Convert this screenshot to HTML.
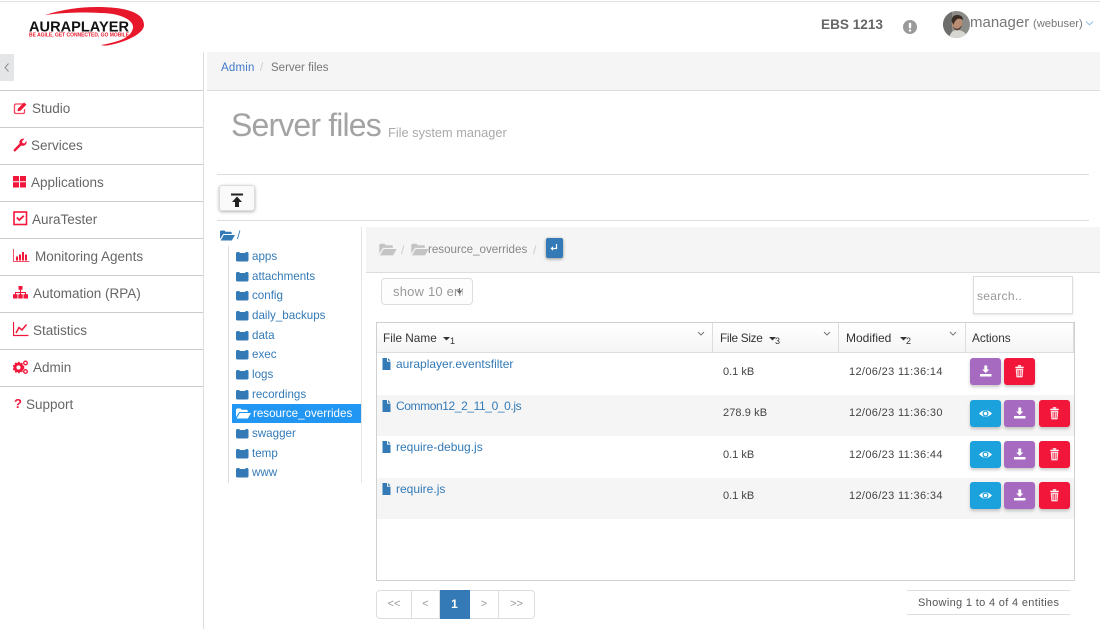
<!DOCTYPE html>
<html><head><meta charset="utf-8"><title>Server files</title>
<style>
html,body{margin:0;padding:0;background:#fff}
#p{position:relative;width:1100px;height:629px;overflow:hidden;background:#fff;font-family:"Liberation Sans",sans-serif;font-size:13px;color:#666}
#p div,#p span.a,#p svg.a{position:absolute}
.t{white-space:nowrap;line-height:16px}
.l{left:0;width:203px;height:1px;background:#ccc}
.m{font-size:13.5px;color:#666;white-space:nowrap;line-height:18px;margin-top:1px}
.h{background:#ddd;height:1px}
.n{color:#337ab7;font-size:11.6px;left:252px;white-space:nowrap;line-height:16px;margin-top:1px}
.th{font-size:11.8px;color:#333;top:331px;white-space:nowrap;line-height:14px}
.sb{font-size:9px;color:#333;top:334px;line-height:14px}
.b{width:31px;height:27px;border-radius:3px;box-shadow:0 2px 3px rgba(0,0,0,.22)}
.b svg{position:absolute;left:8px;top:6px}
.pu{background:#a66bc0}.re{background:#f2163a}.bl{background:#1ba1db}
.f{color:#337ab7;font-size:12px;left:396px;white-space:nowrap;line-height:16px}
.d{font-size:11px;color:#444;white-space:nowrap;line-height:14px;letter-spacing:.35px}
.k{letter-spacing:0}
.pg{top:590px;height:29px;line-height:27px;text-align:center;font-size:11px;color:#999;box-sizing:border-box;border:1px solid #ddd;border-left:0;background:#fff}
</style></head><body><div id="p">
<svg width="0" height="0" style="position:absolute"><defs>
<path id="fc" d="M0 3.5Q0 2 1.500 2H3L4 3H9L10 2H11Q12.500 2 12.500 3.500V10Q12.500 11.500 11 11.500H1.500Q0 11.500 0 10Z"/>
<path id="fo" d="M0 2.800Q0 1.500 1.300 1.500H4.500L5.600 2.800H10.500Q11.700 2.800 11.700 4V5H3.200L0 10ZM3.800 6H15L11.800 11.500H.6Z"/>
<g id="dl"><path d="M6.300 1.500H9.200V5.500H11.300L7.700 9 4.200 5.500H6.300Z" fill="#fff"/><path d="M2 10H13.500V12.500H2Z" fill="#fff"/></g>
<g id="tr"><path d="M3.300 2.800H11.700V4H3.300ZM5.800 1.200H9.200V2.500H5.800Z" fill="#fff"/><path d="M3.700 4.600H11.300L10.600 13.400H4.400ZM5.600 6V12H6.300V6ZM7.200 6V12H7.900V6ZM8.800 6V12H9.500V6Z" fill="#fff" fill-opacity=".85" fill-rule="evenodd"/></g>
<g id="ey"><path d="M1 7.500Q7.500 1 14 7.500 7.500 14 1 7.500Z" fill="#fff"/><circle cx="7.500" cy="7.500" r="3" fill="#1ba1db"/><circle cx="7.500" cy="7.500" r="1.700" fill="#fff"/></g>
<path id="fl" d="M1.500 0H6V3.600H9.500V12H1.500ZM7 0 9.500 2.600H7Z"/>
</defs></svg>

<div class="h" style="left:0;top:1px;width:1100px;background:#e2e2e2"></div>

<svg class="a" style="left:0;top:0" width="150" height="50" viewBox="0 0 150 50">
<path d="M45 15Q70 7 97 7C130 7 144 14 144 25 144 34 125 42 110 45 105 46 103 45.500 101 45 118 42 131 38 133 28 134 20 120 13 100 13 72 11 45 15 45 15Z" fill="#e8182c"/>
<text x="29" y="31.700" font-family="Liberation Sans" font-size="15" font-weight="bold" fill="#111" textLength="100" lengthAdjust="spacingAndGlyphs">AURAPLAYER</text>
<text x="29" y="36.500" font-family="Liberation Sans" font-size="5.600" font-weight="bold" fill="#e8182c" textLength="100" lengthAdjust="spacingAndGlyphs">BE AGILE, GET CONNECTED, GO MOBILE</text>
</svg>

<div class="t" style="left:821px;top:17px;font-size:13.600px;font-weight:bold;color:#666">EBS 1213</div>
<svg class="a" style="left:903px;top:20px" width="14" height="14"><circle cx="7" cy="7" r="7" fill="#9a9a9a"/><rect x="5.800" y="2.800" width="2.400" height="5.600" rx="1" fill="#fff"/><rect x="5.800" y="9.400" width="2.400" height="2.200" rx="1" fill="#fff"/></svg>
<svg class="a" style="left:943px;top:11px" width="27" height="27" viewBox="0 0 27 27"><defs><clipPath id="av"><circle cx="13.500" cy="13.500" r="13.500"/></clipPath></defs><g clip-path="url(#av)"><rect width="27" height="27" fill="#8b8b88"/><rect x="0" width="9" height="27" fill="#6e6e6c"/><path d="M6 27Q8 19 14 19 22 19 25 27Z" fill="#d8d6d0"/><ellipse cx="14" cy="12" rx="5.300" ry="7" fill="#b98d74"/><path d="M8.500 10Q9 3.500 15 4 20 4.500 20 9 17 7 14 8 11 11 10.500 14Z" fill="#3a2c25"/><path d="M10 15Q14 21 19 14 18 19 14 19.500 11 19 10 15Z" fill="#54403a"/></g></svg>
<div class="t" style="left:970px;top:15px;font-size:15px;color:#777">manager</div>
<div class="t" style="left:1033px;top:16px;font-size:11.200px;color:#777">(webuser)</div>
<svg class="a" style="left:1085px;top:20px" width="10" height="7"><path d="M1 1.500 4.500 4.800 8 1.500" fill="none" stroke="#8fc0ea" stroke-width="1"/></svg>

<div style="left:203px;top:52px;width:1px;height:577px;background:#ddd"></div>
<div style="left:0;top:54px;width:14px;height:27px;background:#e4e5e6"></div>
<svg class="a" style="left:3px;top:62px" width="8" height="11"><path d="M5.500 1.500 2 5.500 5.500 9.500" fill="none" stroke="#8a9097" stroke-width="1"/></svg>

<div class="l" style="top:90px"></div><div class="l" style="top:127px"></div><div class="l" style="top:164px"></div><div class="l" style="top:201px"></div><div class="l" style="top:238px"></div><div class="l" style="top:275px"></div><div class="l" style="top:312px"></div><div class="l" style="top:349px"></div><div class="l" style="top:386px"></div>

<svg class="a" style="left:13px;top:101px" width="16" height="14" viewBox="0 0 16 14"><path d="M11 3H3Q1.500 3 1.500 4.500V11Q1.500 12.500 3 12.500H10Q11.500 12.500 11.500 11V8" fill="none" stroke="#f2163a" stroke-width="1.300" opacity=".8"/><path d="M5 7.500 11 1.500 13.500 3.500 7.500 9.800 4.500 10.300Z" fill="#f2163a"/></svg>
<div class="m" style="left:32px;top:99px">Studio</div>
<svg class="a" style="left:13px;top:138px" width="14" height="14" viewBox="0 0 14 14"><path d="M.8 11.500 6.500 5.600Q5.800 2.500 8.500 1 10.300.3 11.500.8L9 3.200 9.500 5 11.300 5.500 13.500 3Q14 5 12.500 6.800 10.500 8.500 8.200 7.500L2.500 13.300Q1.500 13.800.8 13 .3 12.300.8 11.500Z" fill="#f2163a"/></svg>
<div class="m" style="left:31px;top:136px">Services</div>
<svg class="a" style="left:13px;top:176px" width="14" height="12"><path d="M0 0H6V5.300H0ZM7 0H13V5.300H7ZM0 6.300H6V11.500H0ZM7 6.300H13V11.500H7Z" fill="#f2163a"/></svg>
<div class="m" style="left:31px;top:173px">Applications</div>
<svg class="a" style="left:13px;top:211px" width="15" height="15"><rect x="1" y="1" width="12.500" height="12.500" fill="none" stroke="#f2163a" stroke-width="1.600"/><path d="M3.800 6.500 6.300 9 10.800 4.800" fill="none" stroke="#f2163a" stroke-width="1.800"/></svg>
<div class="m" style="left:32px;top:210px">AuraTester</div>
<svg class="a" style="left:13px;top:249px" width="17" height="14"><path d="M.5 0V12.500H16.500" fill="none" stroke="#f2163a" stroke-width="1" opacity=".75"/><path d="M3 7.500H5V11.500H3ZM6 5.500H8V11.500H6ZM9 3H11V11.500H9ZM12 5.500H14V11.500H12Z" fill="#f2163a"/></svg>
<div class="m" style="left:35px;top:247px">Monitoring Agents</div>
<svg class="a" style="left:13px;top:286px" width="15" height="13"><path d="M5.500 0H9.500V3.800H5.500ZM7 3.500H8V6H13V8.500H12V7H8V8.500H7V7H3V8.500H2V6H7Z" fill="#f2163a"/><path d="M0 8.300H4.500V12.500H0ZM5.300 8.300H9.700V12.500H5.300ZM10.500 8.300H15V12.500H10.500Z" fill="#f2163a"/></svg>
<div class="m" style="left:33px;top:284px">Automation (RPA)</div>
<svg class="a" style="left:13px;top:322px" width="16" height="15"><path d="M.5 0V13.500H15.500" fill="none" stroke="#f2163a" stroke-width="1.200"/><path d="M3 11 6 5.500 9 8 13.500 2.500" fill="none" stroke="#f2163a" stroke-width="1.500"/></svg>
<div class="m" style="left:33px;top:321px">Statistics</div>
<svg class="a" style="left:13px;top:360px" width="16" height="15"><circle cx="5.500" cy="7.500" r="3.500" fill="none" stroke="#f2163a" stroke-width="2.800"/><circle cx="5.500" cy="7.500" r="5.200" fill="none" stroke="#f2163a" stroke-width="1.200" stroke-dasharray="1.800 1.600"/><circle cx="12.500" cy="3" r="1.800" fill="none" stroke="#f2163a" stroke-width="1.300"/><circle cx="12.500" cy="11.500" r="1.800" fill="none" stroke="#f2163a" stroke-width="1.300"/></svg>
<div class="m" style="left:33px;top:358px">Admin</div>
<div class="t" style="left:14px;top:396px;font-size:13px;font-weight:bold;color:#f2163a">?</div>
<div class="m" style="left:26px;top:395px">Support</div>

<div style="left:207px;top:52px;width:893px;height:38px;background:#f5f5f5;border-bottom:1px solid #ddd"></div>
<div class="t" style="left:221px;top:60px;font-size:11.500px;color:#4179c9;letter-spacing:.2px">Admin</div>
<div class="t" style="left:260px;top:60px;font-size:11.500px;color:#ccc">/</div>
<div class="t" style="left:271px;top:60px;font-size:11.500px;color:#777">Server files</div>
<div class="t" style="left:231px;top:106px;font-size:32px;line-height:38px;color:#a3a3a3;letter-spacing:-.85px">Server files</div>
<div class="t" style="left:388px;top:125px;font-size:12.800px;color:#aaa">File system manager</div>

<div class="h" style="left:217px;top:174px;width:872px"></div>
<div style="left:219px;top:185px;width:36px;height:26px;background:#fafafa;border:1px solid #ddd;box-sizing:border-box;border-radius:3px;box-shadow:0 1px 3px rgba(0,0,0,.3)"></div>
<svg class="a" style="left:230px;top:193px" width="14" height="15"><path d="M1 .500H13V2.500H1ZM7 3.500 12 9H9V14H5V9H2Z" fill="#222"/></svg>
<div class="h" style="left:217px;top:220px;width:872px"></div>

<svg class="a" style="left:220px;top:229px" width="15" height="13" fill="#337ab7"><use href="#fo"/></svg>
<div class="t" style="left:237px;top:227px;font-size:12px;color:#337ab7">/</div>
<div style="left:228px;top:246px;width:1px;height:237px;background:#ddd"></div>
<div style="left:361px;top:227px;width:1px;height:256px;background:#e5e5e5"></div>
<div style="left:232px;top:404px;width:129px;height:19px;background:#2196f3"></div>

<svg class="a" style="left:236px;top:250px" width="13" height="12" fill="#337ab7"><use href="#fc"/></svg><div class="n" style="top:248px">apps</div>
<svg class="a" style="left:236px;top:270px" width="13" height="12" fill="#337ab7"><use href="#fc"/></svg><div class="n" style="top:268px">attachments</div>
<svg class="a" style="left:236px;top:289px" width="13" height="12" fill="#337ab7"><use href="#fc"/></svg><div class="n" style="top:287px">config</div>
<svg class="a" style="left:236px;top:309px" width="13" height="12" fill="#337ab7"><use href="#fc"/></svg><div class="n" style="top:307px">daily_backups</div>
<svg class="a" style="left:236px;top:329px" width="13" height="12" fill="#337ab7"><use href="#fc"/></svg><div class="n" style="top:327px">data</div>
<svg class="a" style="left:236px;top:348px" width="13" height="12" fill="#337ab7"><use href="#fc"/></svg><div class="n" style="top:346px">exec</div>
<svg class="a" style="left:236px;top:368px" width="13" height="12" fill="#337ab7"><use href="#fc"/></svg><div class="n" style="top:366px">logs</div>
<svg class="a" style="left:236px;top:388px" width="13" height="12" fill="#337ab7"><use href="#fc"/></svg><div class="n" style="top:386px">recordings</div>
<svg class="a" style="left:236px;top:407px" width="15" height="12" fill="#fff"><use href="#fo"/></svg><div class="n" style="top:405px;left:253px;color:#fff">resource_overrides</div>
<svg class="a" style="left:236px;top:427px" width="13" height="12" fill="#337ab7"><use href="#fc"/></svg><div class="n" style="top:425px">swagger</div>
<svg class="a" style="left:236px;top:447px" width="13" height="12" fill="#337ab7"><use href="#fc"/></svg><div class="n" style="top:445px">temp</div>
<svg class="a" style="left:236px;top:466px" width="13" height="12" fill="#337ab7"><use href="#fc"/></svg><div class="n" style="top:464px">www</div>

<div style="left:366px;top:227px;width:734px;height:45px;background:#f5f5f5;border-bottom:1px solid #ddd"></div>
<svg class="a" style="left:379px;top:242px" width="18" height="14" viewBox="0 0 15 12" fill="#c4c4c4"><use href="#fo"/></svg>
<div class="t" style="left:401px;top:242px;font-size:12px;color:#ccc">/</div>
<svg class="a" style="left:411px;top:242px" width="18" height="14" viewBox="0 0 15 12" fill="#c4c4c4"><use href="#fo"/></svg>
<div class="t" style="left:428px;top:242px;font-size:11.600px;color:#888">resource_overrides</div>
<div class="t" style="left:533px;top:242px;font-size:12px;color:#ccc">/</div>
<div style="left:546px;top:238px;width:17px;height:20px;background:#337ab7;border-radius:2px;box-shadow:0 1px 3px rgba(0,0,0,.4)"></div>
<svg class="a" style="left:549px;top:243px" width="11" height="10"><path d="M7.500 1V5.500H3" fill="none" stroke="#fff" stroke-width="1.200"/><path d="M4 3.300 1.500 5.500 4 7.700Z" fill="#fff"/></svg>

<div style="left:381px;top:278px;width:92px;height:27px;box-sizing:border-box;border:1px solid #ddd;border-radius:4px;background:#fdfdfd"></div>
<div class="t" style="left:393px;top:284px;font-size:13px;color:#999;letter-spacing:.2px;width:70px;overflow:hidden">show 10 entries</div>
<svg class="a" style="left:456px;top:288px" width="7" height="8"><path d="M.500 2.500H6.500L3.500 6Z" fill="#666"/><rect x="3" y="0" width="1" height="4" fill="#666"/></svg>

<div style="left:973px;top:276px;width:100px;height:38px;box-sizing:border-box;border:1px solid #ddd;background:#fff;box-shadow:0 1px 2px rgba(0,0,0,.1)"></div>
<div class="t" style="left:977px;top:288px;font-size:12px;color:#999;letter-spacing:.3px">search..</div>

<div style="left:376px;top:322px;width:699px;height:259px;box-sizing:border-box;border:1px solid #d0d0d0;background:#fff"></div>
<div style="left:377px;top:323px;width:697px;height:29px;background:linear-gradient(#fff,#f5f5f5);border-bottom:1px solid #ddd"></div>
<div style="left:712px;top:323px;width:1px;height:29px;background:#ddd"></div>
<div style="left:838px;top:323px;width:1px;height:29px;background:#ddd"></div>
<div style="left:965px;top:323px;width:1px;height:29px;background:#ddd"></div>
<div style="left:1073px;top:323px;width:1px;height:29px;background:#ddd"></div>
<div style="left:377px;top:395px;width:697px;height:41px;background:#f5f5f5"></div>
<div style="left:377px;top:478px;width:697px;height:41px;background:#f5f5f5"></div>

<div class="th" style="left:383px">File Name</div>
<svg class="a" style="left:443px;top:336px" width="8" height="6"><path d="M0 1H7L3.500 4.500Z" fill="#333"/></svg><div class="t sb" style="left:450px">1</div>
<svg class="a" style="left:697px;top:331px" width="8" height="6"><path d="M1 1 4 4 7 1" fill="none" stroke="#777"/></svg>
<div class="th" style="left:720px;letter-spacing:-.3px">File Size</div>
<svg class="a" style="left:769px;top:336px" width="8" height="6"><path d="M0 1H7L3.500 4.500Z" fill="#333"/></svg><div class="t sb" style="left:775px">3</div>
<svg class="a" style="left:823px;top:331px" width="8" height="6"><path d="M1 1 4 4 7 1" fill="none" stroke="#777"/></svg>
<div class="th" style="left:846px;font-size:12px">Modified</div>
<svg class="a" style="left:900px;top:336px" width="8" height="6"><path d="M0 1H7L3.500 4.500Z" fill="#333"/></svg><div class="t sb" style="left:906px">2</div>
<svg class="a" style="left:949px;top:331px" width="8" height="6"><path d="M1 1 4 4 7 1" fill="none" stroke="#777"/></svg>
<div class="th" style="left:972px">Actions</div>

<svg class="a" style="left:381px;top:358px" width="10" height="12" fill="#337ab7"><use href="#fl"/></svg><div class="f" style="top:356px">auraplayer.eventsfilter</div>
<div class="d k" style="left:723px;top:365px">0.1 kB</div><div class="d" style="left:849px;top:365px">12/06/23 11:36:14</div>
<svg class="a" style="left:381px;top:400px" width="10" height="12" fill="#337ab7"><use href="#fl"/></svg><div class="f" style="top:398px;letter-spacing:-.4px">Common12_2_11_0_0.js</div>
<div class="d" style="left:723px;top:406px;letter-spacing:.1px">278.9 kB</div><div class="d" style="left:849px;top:406px">12/06/23 11:36:30</div>
<svg class="a" style="left:381px;top:441px" width="10" height="12" fill="#337ab7"><use href="#fl"/></svg><div class="f" style="top:439px">require-debug.js</div>
<div class="d k" style="left:723px;top:448px">0.1 kB</div><div class="d" style="left:849px;top:448px">12/06/23 11:36:44</div>
<svg class="a" style="left:381px;top:483px" width="10" height="12" fill="#337ab7"><use href="#fl"/></svg><div class="f" style="top:481px">require.js</div>
<div class="d k" style="left:723px;top:489px">0.1 kB</div><div class="d" style="left:849px;top:489px">12/06/23 11:36:34</div>

<div class="b pu" style="left:970px;top:358px"><svg width="15" height="14"><use href="#dl"/></svg></div>
<div class="b re" style="left:1004px;top:358px"><svg width="15" height="14"><use href="#tr"/></svg></div>

<div class="b bl" style="left:970px;top:400px"><svg width="15" height="15"><use href="#ey"/></svg></div>
<div class="b pu" style="left:1004px;top:400px"><svg width="15" height="14"><use href="#dl"/></svg></div>
<div class="b re" style="left:1039px;top:400px"><svg width="15" height="14"><use href="#tr"/></svg></div>

<div class="b bl" style="left:970px;top:441px"><svg width="15" height="15"><use href="#ey"/></svg></div>
<div class="b pu" style="left:1004px;top:441px"><svg width="15" height="14"><use href="#dl"/></svg></div>
<div class="b re" style="left:1039px;top:441px"><svg width="15" height="14"><use href="#tr"/></svg></div>

<div class="b bl" style="left:970px;top:482px"><svg width="15" height="15"><use href="#ey"/></svg></div>
<div class="b pu" style="left:1004px;top:482px"><svg width="15" height="14"><use href="#dl"/></svg></div>
<div class="b re" style="left:1039px;top:482px"><svg width="15" height="14"><use href="#tr"/></svg></div>

<div class="pg" style="left:376px;width:36px;border-left:1px solid #ddd;border-radius:4px 0 0 4px">&lt;&lt;</div>
<div class="pg" style="left:412px;width:28px">&lt;</div>
<div class="pg" style="left:440px;width:30px;background:#337ab7;border-color:#337ab7;color:#fff;font-weight:bold;font-size:12px">1</div>
<div class="pg" style="left:470px;width:29px">&gt;</div>
<div class="pg" style="left:499px;width:36px;border-radius:0 4px 4px 0">&gt;&gt;</div>

<div class="h" style="left:907px;top:590px;width:163px"></div>
<div class="t" style="left:918px;top:595px;font-size:11px;color:#555;letter-spacing:.33px">Showing 1 to 4 of 4 entities</div>
<div class="h" style="left:907px;top:614px;width:163px"></div>
</div></body></html>
